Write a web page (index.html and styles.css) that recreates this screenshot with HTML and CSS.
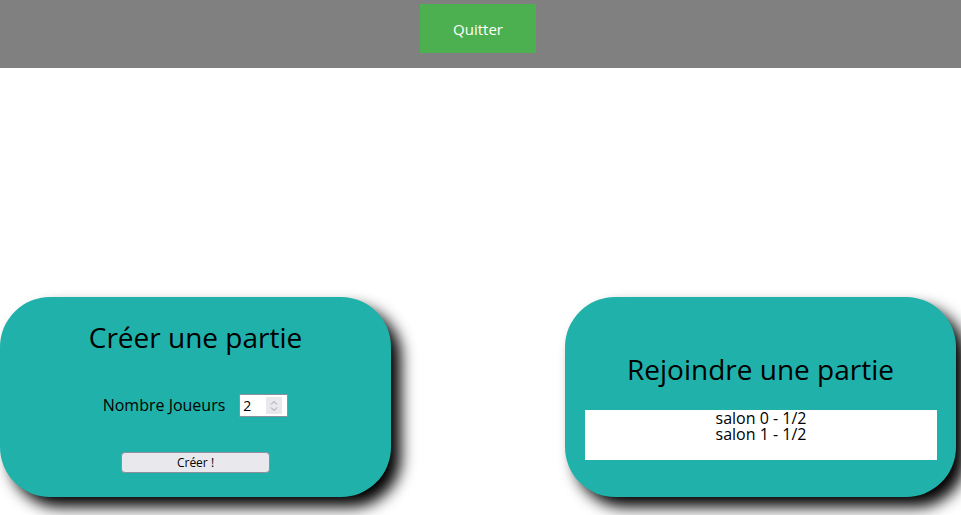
FILE: index.html
```html
<!DOCTYPE html>
<html lang="fr">
<head>
<meta charset="utf-8">
<title>Jeu</title>
<link rel="stylesheet" href="styles.css">
</head>
<body>
<header class="topbar">
  <button class="quit-btn" type="button">Quitter</button>
</header>
<main class="lobby">
  <section class="card card-create">
    <h2 class="card-title">Créer une partie</h2>
    <div class="players-row">
      <span class="players-label">Nombre Joueurs</span>
      <div class="num-input">
        <span class="num-value">2</span>
        <span class="spin">
          <svg width="10" height="14" viewBox="0 0 10 14" aria-hidden="true">
            <path d="M2 5.5 L5 2.5 L8 5.5" fill="none" stroke="#9a9aa6" stroke-width="1"/>
            <path d="M2 8.5 L5 11.5 L8 8.5" fill="none" stroke="#9a9aa6" stroke-width="1"/>
          </svg>
        </span>
      </div>
    </div>
    <button class="create-btn" type="button">Créer !</button>
  </section>
  <section class="card card-join">
    <h2 class="card-title">Rejoindre une partie</h2>
    <div class="room-list">
      <div class="room">salon 0 - 1/2</div>
      <div class="room">salon 1 - 1/2</div>
    </div>
  </section>
</main>
</body>
</html>
```

FILE: styles.css
```css
html {
  overflow: hidden;
}

body {
  margin: 0;
  padding: 0;
  background: #ffffff;
  font-family: "Open Sans", "Noto Sans", sans-serif;
  color: #000;
  min-height: 515px;
}

.topbar {
  height: 68px;
  box-sizing: border-box;
  background: #808080;
  display: flex;
  justify-content: center;
  align-items: flex-start;
  padding: 4px 5px 0 0;
}

.quit-btn {
  width: 116px;
  height: 49px;
  border: none;
  background: #4caf50;
  color: #ffffff;
  font-family: "Open Sans", "Noto Sans", sans-serif;
  font-size: 15px;
  padding: 0;
}

.lobby {
  display: flex;
  justify-content: space-between;
  padding: 229px 5px 18px 0;
}

.card {
  width: 391px;
  height: 200px;
  box-sizing: border-box;
  background: #20b2aa;
  border-radius: 50px;
  box-shadow: 10px 10px 15px #000;
  display: flex;
  flex-direction: column;
  align-items: center;
}

.card-title {
  margin: 0;
  font-size: 28px;
  line-height: 38px;
  font-weight: 400;
}

.card-create {
  padding-top: 21px;
}

.players-row {
  margin-top: 38px;
  height: 23px;
  display: flex;
  align-items: center;
  gap: 14px;
}

.players-label {
  font-size: 16px;
  line-height: 23px;
}

.num-input {
  width: 49px;
  height: 23px;
  box-sizing: border-box;
  border: 1px solid #8f8f9d;
  background: #fff;
  display: flex;
  align-items: stretch;
  padding: 2px 5px 2px 3px;
}

.num-value {
  flex: 1;
  font-size: 14px;
  line-height: 17px;
}

.spin {
  width: 16px;
  background: #e9e9ed;
  display: flex;
  align-items: center;
  justify-content: center;
}

.create-btn {
  margin-top: 35px;
  width: 149px;
  height: 21px;
  box-sizing: border-box;
  background: #e9e9ed;
  border: 1px solid #8f8f9d;
  border-radius: 4px;
  font-family: "Open Sans", "Noto Sans", sans-serif;
  font-size: 12px;
  color: #000;
  padding: 0;
}

.card-join {
  padding-top: 53px;
}

.room-list {
  margin-top: 22px;
  align-self: stretch;
  margin-left: 20px;
  margin-right: 19px;
  height: 50px;
  background: #fff;
  text-align: center;
  font-size: 16px;
  line-height: 16px;
}
```
